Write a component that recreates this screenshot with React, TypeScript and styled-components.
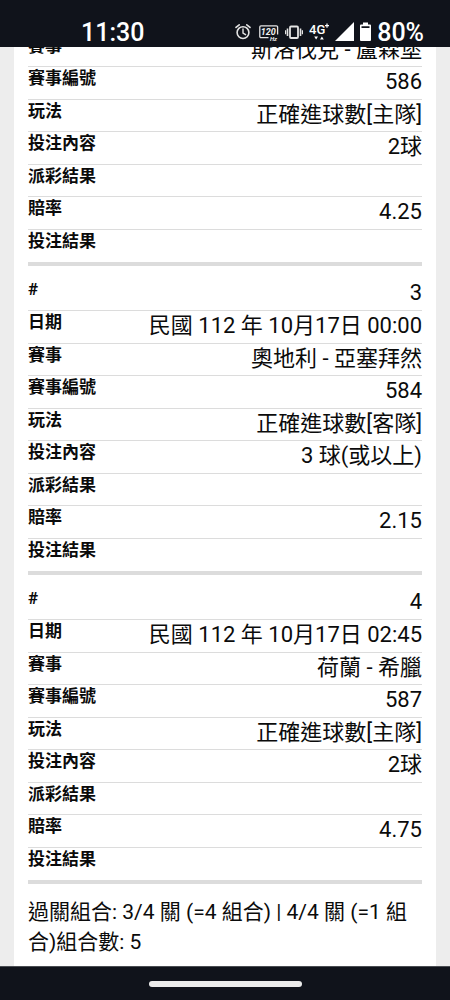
import React from 'react';
import styled, { createGlobalStyle } from 'styled-components';

const GlobalStyle = createGlobalStyle`
  * { box-sizing: border-box; }
  body {
    margin: 0;
    background: #ededed;
    color: #0b0b0b;
    font-family: Roboto, "Noto Sans CJK TC", sans-serif;
  }
`;

const Screen = styled.div`
  display: flex;
  flex-direction: column;
  height: 100vh;
  overflow: hidden;
`;

const StatusBar = styled.header`
  display: flex;
  flex: none;
  align-items: flex-start;
  justify-content: space-between;
  height: 47px;
  padding: 18px 26px 0 81px;
  background: #10131b;
  color: #ffffff;
`;

const StatusText = styled.span`
  font-size: 25px;
  font-weight: 500;
  line-height: 30px;
`;

const StatusIcons = styled.div`
  display: flex;
  align-items: flex-start;
  gap: 6px;
`;

const Icon = styled.svg`
  flex: none;
  display: block;
  height: 30px;
`;

/* The sheet is kept scrolled to its end, so older bets leave by the top. */
const Viewport = styled.main`
  display: flex;
  flex: 1;
  flex-direction: column;
  justify-content: flex-end;
  min-height: 0;
  overflow: hidden;
  padding: 0 14px;
`;

const Sheet = styled.section`
  flex: none;
  padding: 0 14px 9px;
  background: #ffffff;
`;

const BetTable = styled.table`
  width: 100%;
  border-spacing: 0;
  border-bottom: 4px solid #dcdcdc;
`;

const Label = styled.th`
  padding: 0;
  font-size: 17px;
  font-weight: 700;
  line-height: 22px;
  text-align: left;
  vertical-align: top;
  white-space: nowrap;
`;

const Value = styled.td`
  padding: 0;
  font-size: 22px;
  line-height: 30px;
  text-align: right;
  vertical-align: top;
`;

const Row = styled.tr<{ $first?: boolean }>`
  height: ${(p) => (p.$first ? 45 : 32)}px;

  &:nth-child(even) {
    height: 33px;
  }

  & > ${Label}, & > ${Value} {
    padding-top: ${(p) => (p.$first ? 12 : 0)}px;
    border-bottom: 1px solid #dcdcdc;
  }

  &:last-child > ${Label}, &:last-child > ${Value} {
    border-bottom: 0;
  }
`;

const Summary = styled.p`
  margin: 0;
  padding-top: 13px;
  font-size: 21px;
  line-height: 30px;
`;

const NavBar = styled.footer`
  display: flex;
  flex: none;
  align-items: center;
  justify-content: center;
  height: 34px;
  border-top: 1px solid #4a4d52;
  background: #10131b;
`;

const HomePill = styled.button`
  width: 153px;
  height: 6px;
  padding: 0;
  border: 0;
  border-radius: 3px;
  background: #ebebeb;
`;

type Field = [label: string, value: string];

const bets: { id: string; fields: Field[] }[] = [
  {
    id: '2',
    fields: [
      ['賽事', '斯洛伐克 - 盧森堡'],
      ['賽事編號', '586'],
      ['玩法', '正確進球數[主隊]'],
      ['投注內容', '2球'],
      ['派彩結果', ''],
      ['賠率', '4.25'],
      ['投注結果', ''],
    ],
  },
  {
    id: '3',
    fields: [
      ['#', '3'],
      ['日期', '民國 112 年 10月17日 00:00'],
      ['賽事', '奧地利 - 亞塞拜然'],
      ['賽事編號', '584'],
      ['玩法', '正確進球數[客隊]'],
      ['投注內容', '3 球(或以上)'],
      ['派彩結果', ''],
      ['賠率', '2.15'],
      ['投注結果', ''],
    ],
  },
  {
    id: '4',
    fields: [
      ['#', '4'],
      ['日期', '民國 112 年 10月17日 02:45'],
      ['賽事', '荷蘭 - 希臘'],
      ['賽事編號', '587'],
      ['玩法', '正確進球數[主隊]'],
      ['投注內容', '2球'],
      ['派彩結果', ''],
      ['賠率', '4.75'],
      ['投注結果', ''],
    ],
  },
];

const AlarmIcon = () => (
  <Icon width="18" viewBox="0 0 18 30" fill="none" stroke="#e4e4e4" strokeLinecap="round" aria-hidden="true">
    <circle cx="8" cy="14.6" r="5.9" strokeWidth="1.6" />
    <path d="M8 11v4l2.6 1.7" strokeWidth="1.4" />
    <path d="M1 9.4 4.2 6.8M15 9.4l-3.2-2.6" strokeWidth="1.6" />
  </Icon>
);

const RefreshRateIcon = () => (
  <Icon width="20" viewBox="0 0 20 30" aria-hidden="true">
    <path
      d="M9.5 19.6H2A1.2 1.2 0 0 1 .8 18.4V9A1.2 1.2 0 0 1 2 7.800h15.400a1.200 1.200 0 0 1 1.200 1.200v7.500"
      fill="none"
      stroke="#e4e4e4"
      strokeWidth="1.300"
    />
    <text x="1.800" y="16.500" fill="#f0f0f0" fontSize="9" fontWeight="700" fontStyle="italic">120</text>
    <text x="11" y="22.500" fill="#f0f0f0" fontSize="6" fontWeight="700" fontStyle="italic">Hz</text>
  </Icon>
);

const VibrateIcon = () => (
  <Icon width="18" viewBox="0 0 18 30" fill="none" stroke="#e4e4e4" aria-hidden="true">
    <rect x="5" y="8.500" width="8" height="11.500" rx="1" strokeWidth="1.800" />
    <path d="M2.500 10.500v7.500M15.500 10.500v7.500" strokeWidth="1.600" />
    <path d="M.6 12.300v4M17.400 12.300v4" strokeWidth="1.200" />
  </Icon>
);

const NetworkIcon = () => (
  <Icon width="20" viewBox="0 0 20 30" fill="#ffffff" aria-hidden="true">
    <text x="0" y="15.500" fontSize="13" fontWeight="500">4G</text>
    <path d="M17.400 5.500h1.200V7H20v1.200h-1.400v1.500h-1.200V8.200H16V7h1.400z" />
    <path d="M5.200 18.600h3.800l-1.900 3zM11 21.600h3.800l-1.900-3z" />
  </Icon>
);

const SignalIcon = () => (
  <Icon width="19" viewBox="0 0 19 30" fill="#ffffff" aria-hidden="true">
    <path d="M0 23 19 4v19z" />
  </Icon>
);

const BatteryIcon = () => (
  <Icon width="11" viewBox="0 0 11 30" fill="#ffffff" aria-hidden="true">
    <path
      fillRule="evenodd"
      d="M3 4.500h5v2h2a1 1 0 0 1 1 1V22a1 1 0 0 1-1 1H1a1 1 0 0 1-1-1V7.500a1 1 0 0 1 1-1h2zM1.500 8.200v1.800h8V8.200z"
    />
  </Icon>
);

export default function App() {
  return (
    <Screen>
      <GlobalStyle />
      <StatusBar>
        <StatusText>11:30</StatusText>
        <StatusIcons>
          <AlarmIcon />
          <RefreshRateIcon />
          <VibrateIcon />
          <NetworkIcon />
          <SignalIcon />
          <BatteryIcon />
          <StatusText>80%</StatusText>
        </StatusIcons>
      </StatusBar>
      <Viewport>
        <Sheet>
          {bets.map((bet) => (
            <BetTable key={bet.id}>
              <tbody>
                {bet.fields.map(([label, value]) => (
                  <Row key={label} $first={label === '#'}>
                    <Label scope="row">{label}</Label>
                    <Value>{value}</Value>
                  </Row>
                ))}
              </tbody>
            </BetTable>
          ))}
          <Summary>過關組合: 3/4 關 (=4 組合) | 4/4 關 (=1 組合)組合數: 5</Summary>
        </Sheet>
      </Viewport>
      <NavBar>
        <HomePill type="button" aria-label="Home" />
      </NavBar>
    </Screen>
  );
}
